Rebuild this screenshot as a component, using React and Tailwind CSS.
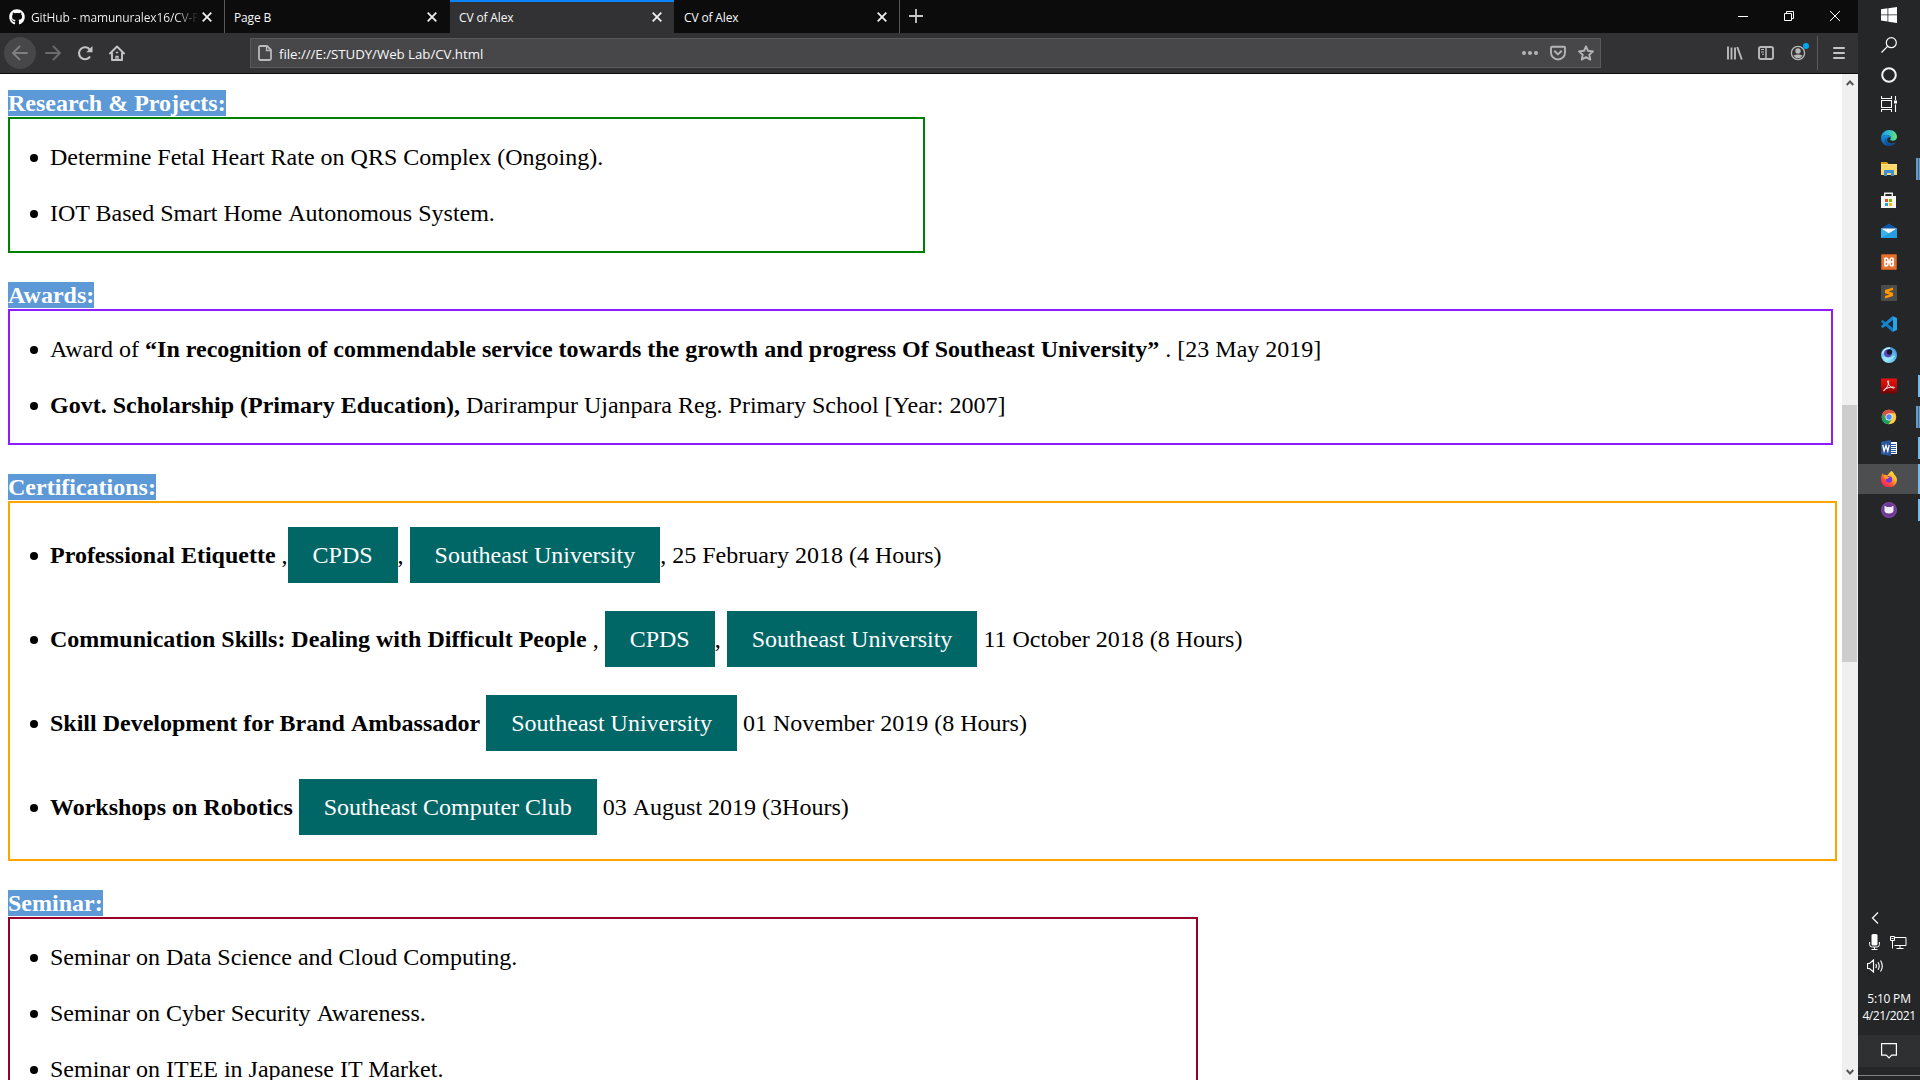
import React from 'react';
import { FaGithub } from 'react-icons/fa';

const Tab = ({ title, icon, w, active, fade, border, pad = 'ml-[9px]', close = 'right-[13px]' }) => (
  <div
    className={`relative flex h-[33px] shrink-0 items-center ${w} ${active ? 'bg-[#323234] border-t-2 border-[#0a84ff]' : 'bg-[#0c0c0d]'}`}
  >
    {icon && <FaGithub className="ml-[9px] h-4 w-4 shrink-0 text-white" />}
    <span
      className={`whitespace-nowrap text-[12px] leading-[16px] tracking-[-0.14px] text-[#f9f9fa] ${active ? 'mt-0' : 'mt-[2px]'} ${icon ? 'ml-[6px]' : pad} ${fade ? 'bg-gradient-to-r from-[#f9f9fa] from-[86%] to-[#0c0c0d] bg-clip-text text-transparent' : ''}`}
    >
      {title}
    </span>
    <svg className={`absolute h-[10px] w-[10px] ${close} ${active ? 'top-[10px]' : 'top-[12px]'}`} viewBox="0 0 10 10" stroke="#f0f0f0" strokeWidth="1.8">
      <path d="M.7.7l8.600 8.600M9.300.7L.7 9.300" />
    </svg>
    {border && <div className="absolute right-0 top-0 h-[33px] w-px bg-[#58585a]" />}
  </div>
);

const Section = ({ title, w, color, children, first }) => (
  <section className={first ? '' : 'mt-7'}>
    <h2 className="flex h-7 items-center">
      <span className="h-[26px] bg-[#5c99d6] font-bold leading-[26px] text-white">{title}</span>
    </h2>
    <ul className={`flex flex-col gap-7 border-2 py-6 pl-10 ${w} ${color}`}>{children}</ul>
  </section>
);

const Item = ({ children, tall }) => (
  <li className={`relative whitespace-pre ${tall ? 'h-14 leading-[56px]' : 'h-7 leading-7'}`}>
    <span className={`absolute left-[-20px] h-2 w-2 rounded-full bg-black ${tall ? 'top-[25px]' : 'top-[11px]'}`} />
    {children}
  </li>
);

/* A separate inline box, so that the space before a capital A keeps its full width. */
const K = ({ children }) => <span className="inline-block">{children}</span>;

const Btn = ({ children }) => (
  <a className="inline-block h-14 bg-[#006666] px-[25px] align-top leading-[56px] text-white">{children}</a>
);

const I = 'h-4 w-4 block';
const icons = {
  search: (
    <svg className={I} viewBox="0 0 16 16" fill="none" stroke="#fff" strokeWidth="1.2"><circle cx="10.3" cy="5.7" r="5" /><path d="M6.8 9.2L.5 15.5" /></svg>
  ),
  cortana: (
    <svg className={I} viewBox="0 0 16 16" fill="none" stroke="#f4f4f4" strokeWidth="2"><circle cx="8" cy="8" r="6.8" /></svg>
  ),
  taskview: (
    <svg className={I} viewBox="0 0 16 16" fill="none" stroke="#fff" strokeWidth="1.1"><path d="M.5 4.5h10v7H.5zM.5 0v2.5h10V0M.5 16v-2.5h10V16M14.5 0v4M14.5 8.500v7.500" /><path d="M13 4.500h3v3h-3z" fill="#fff" stroke="none" /></svg>
  ),
  edge: (
    <svg className={I} viewBox="0 0 16 16">
      <defs>
        <linearGradient id="edgeTop" x1="0" x2="1"><stop stopColor="#1b9de2" /><stop offset=".55" stopColor="#35c1c8" /><stop offset="1" stopColor="#66eb6e" /></linearGradient>
        <linearGradient id="edgeLow" x1="0" y1="0" x2="0" y2="1"><stop stopColor="#1890df" /><stop offset="1" stopColor="#0c59a4" /></linearGradient>
      </defs>
      <path d="M0 8C.3 3 4 0 8.200 0 13 0 16 3.400 16 6.800c0 2.600-2 4-4.200 4-1.900 0-2.700-.7-2.700-1.200 0-.4.7-.7.7-1.800C9.800 6 7.900 5 5.800 5 2.500 5 .3 6.500 0 8z" fill="url(#edgeTop)" />
      <path d="M0 8c.4-2 2.500-3 5.200-3C8 5 9.800 6.500 9.800 7.500 8.500 6.600 6 7.500 6 10c0 2 2.500 4 5 3.500 1.500-.2 3-.8 3.600-1.200C13 14.800 10.700 16 8 16 3.500 16 0 12.500 0 8z" fill="url(#edgeLow)" />
      <path d="M5.500 7.400C4 9.500 5 14 10.300 14.200c2 0 3.500-.9 4.300-1.900C13 14.800 11 16 8.500 16 4.500 15.500 2.500 10 5.500 7.400z" fill="#114a8b" />
    </svg>
  ),
  explorer: (
    <svg className={I} viewBox="0 0 16 16"><path d="M0 1h6l1.500 2H0z" fill="#e39c0a" /><path d="M0 3h16v11H0z" fill="#ffd869" /><path d="M0 3h16v1H0z" fill="#fbe08a" /><path d="M3 15V9h10v6h-3v-3H6v3z" fill="#3d8fd6" /></svg>
  ),
  store: (
    <svg className={I} viewBox="0 0 16 16"><path d="M3.700 5V1.200h7.600V5" fill="none" stroke="#eee" strokeWidth="1.400" /><path d="M0 4h15v12H0z" fill="#f5f5f5" /><path d="M4 7h3v3H4z" fill="#e74c25" /><path d="M8 7h3v3H8z" fill="#7db700" /><path d="M4 11h3v3H4z" fill="#1ca4e8" /><path d="M8 11h3v3H8z" fill="#fdb900" /></svg>
  ),
  mail: (
    <svg className={I} viewBox="0 0 16 16"><path d="M0 5.500L8 .5l8 5V8H0z" fill="#0c56a8" /><path d="M0 5.500h16L8 11z" fill="#f4f7fa" /><path d="M0 5.500l8 5 8-5v9.500H0z" fill="#35b4ee" /><path d="M0 15L16 5.500V15z" fill="#1e90dc" opacity=".65" /></svg>
  ),
  xampp: (
    <svg className={I} viewBox="0 0 16 16"><rect x=".5" y=".5" width="15" height="15" rx=".5" fill="#e8702e" stroke="#b85a24" /><path d="M7 8H5.300C3.200 8 3.200 4 5.300 4S7 8 7 8zM9 8h1.700c2.100 0 2.100-4 0-4S9 8 9 8zM7 8H5.300c-2.100 0-2.100 4 0 4S7 8 7 8zM9 8h1.700c2.100 0 2.100 4 0 4S9 8 9 8zM6.500 8h3" fill="none" stroke="#fff" strokeWidth="1.700" strokeLinejoin="round" /></svg>
  ),
  sublime: (
    <svg className={I} viewBox="0 0 16 16"><rect width="16" height="16" rx="1" fill="#4c4c4c" /><path d="M12 2.600L4 5.100v3.100l4.500 1.400L4 11v2.500l8-2.600V7.700L7.500 6.400 12 5z" fill="#ff9800" /></svg>
  ),
  vscode: (
    <svg className={I} viewBox="0 0 16 16"><path d="M12 12L1.800 4 .2 4.900v1L11.500 16z" fill="#0d7dc6" /><path d="M12 4L1.800 12l-1.600-.9v-1L11.500 0z" fill="#1689d2" /><path d="M11.500 0L16 2v12l-4.500 2 .5-4V4z" fill="#28a3ee" /></svg>
  ),
  orb: (
    <svg className={I} viewBox="0 0 16 16"><defs><radialGradient id="orb" cx=".35" cy=".8" r=".9"><stop stopColor="#a3ecff" /><stop offset=".5" stopColor="#62c4f5" /><stop offset="1" stopColor="#3c8fe0" /></radialGradient></defs><circle cx="8" cy="8" r="8" fill="url(#orb)" /><path d="M1.500 6.500A7 6 0 0 1 9 1.300" stroke="#d2f4ff" strokeWidth="1.400" fill="none" /><path d="M2.500 10q5 5 11-1" stroke="#a5e8ff" strokeWidth="1.300" fill="none" /><circle cx="7" cy="6.300" r="3.900" fill="#5b46b5" /><circle cx="8.500" cy="5" r="2.700" fill="#17172b" /></svg>
  ),
  acrobat: (
    <svg className={I} viewBox="0 0 16 16"><defs><linearGradient id="pdf" x1="0" y1="0" x2="0" y2="1"><stop stopColor="#e81410" /><stop offset=".5" stopColor="#c40c0a" /><stop offset="1" stopColor="#6e0303" /></linearGradient></defs><path d="M0 .5h16v15H0z" fill="url(#pdf)" /><path d="M2.800 12.700c2-1 5.500-6.200 4.800-9.500-.2-1-1.300-.6-.9.800C7.300 7 9.800 9.800 12.700 10.200c1.300 0 .9-1.300-.9-1.200-3 .1-6.600 1-8.500 2.500-1 .8-.8 1.300-.5 1.200z" fill="none" stroke="#fff" strokeWidth=".9" /></svg>
  ),
  chrome: (
    <svg className={I} viewBox="0 0 16 16"><circle cx="8" cy="8" r="7.300" fill="#fdcb44" /><path d="M1.700 4.350A7.300 7.300 0 0 1 14.300 4.350H8L4.750 9.900z" fill="#dd5144" /><path d="M1.700 4.350A7.300 7.300 0 0 0 7.500 15.300l3.700-5.500L8 11.500 4.750 9.900z" fill="#1da361" /><circle cx="8" cy="8" r="3.500" fill="#f1f1f1" /><circle cx="8" cy="8" r="2.700" fill="#4c8bf5" /></svg>
  ),
  word: (
    <svg className={I} viewBox="0 0 16 16"><path d="M9 2h7v12H9z" fill="#fff" /><path d="M10 4.500h5M10 6.500h5M10 8.500h5M10 10.500h5M10 12.500h5" stroke="#2b579a" /><path d="M0 1.800L10 0v16L0 14.200z" fill="#2b579a" /><path d="M1.800 5l1.300 6L5 5.500 6.800 11l1.400-6" fill="none" stroke="#fff" strokeWidth="1.300" /></svg>
  ),
  firefox: (
    <svg className={I} viewBox="0 0 16 16"><defs><linearGradient id="fox" x1="1" y1="0" x2="0.200" y2="1"><stop stopColor="#fff44f" /><stop offset=".4" stopColor="#ffb52a" /><stop offset=".68" stopColor="#ff5634" /><stop offset="1" stopColor="#f5156c" /></linearGradient></defs><path d="M10.500 0c2 1.500 2.400 2.700 2.700 3.500C15 5 16 7 16 9a8 7.300 0 0 1-16 0C0 6 .6 4 1.800 2.300L2.900 4C4 3.500 5.500 3.700 6.500 4.500 7.500 2.500 9 1 10.500 0z" fill="url(#fox)" /><circle cx="8" cy="8.500" r="3.200" fill="#7a35dc" /><path d="M2.500 5.200c2-1 4.500 0 5.800 1.600L6 8C4.300 8.200 3 7.200 2.500 5.200z" fill="#ff9a26" /></svg>
  ),
  octo: (
    <svg className={I} viewBox="0 0 16 16"><circle cx="8" cy="8" r="8" fill="#6a3a94" /><circle cx="8" cy="8" r="7.300" fill="none" stroke="#84519f" strokeWidth=".8" /><path d="M3.800 3.800L6 4.900h4l2.200-1.100c.5 1 .4 2 .2 2.600.9 3.500-1 5.200-4.400 5.200S2.700 9.900 3.600 6.400c-.3-.8-.2-1.800.2-2.600z" fill="#f3eef7" /></svg>
  ),
};

const taskItems = [
  ['edge', 0], ['explorer', 2], ['store', 0], ['mail', 0], ['xampp', 0], ['sublime', 0], ['vscode', 0], ['orb', 0],
  ['acrobat', 1], ['chrome', 2], ['word', 1], ['firefox', 1], ['octo', 1],
];

const Taskbar = () => (
  <aside className="flex h-full w-[62px] flex-col bg-[#242628] font-['Open_Sans',sans-serif]">
    <div className="flex flex-col items-center pt-[7px]">
      <svg className={I} viewBox="0 0 16 16" fill="#fff"><path d="M0 2.200l6.500-.9v6.200H0zM7.300 1.200L16 0v7.500H7.300zM0 8.300h6.500v6.200L0 13.600zM7.300 8.300H16V16l-8.700-1.200z" /></svg>
      <div className="mt-[14px]">{icons.search}</div>
      <div className="mt-[14px]">{icons.cortana}</div>
      <div className="mt-[13px]">{icons.taskview}</div>
    </div>
    <div className="mt-[10px] flex flex-col">
      {taskItems.map(([k, n]) => (
        <div key={k} className={`relative flex items-center justify-center ${k === 'firefox' ? 'mt-px h-[30px] bg-[#4c4e50]' : 'h-[31px]'}`}>
          {icons[k]}
          {n > 0 && (
            <div className={`absolute right-0 flex ${k === 'firefox' ? 'top-0 h-[30px]' : 'top-[5px] h-[22px]'}`}>
              {n === 2 ? (
                <>
                  <div className="w-[2px] bg-[#6a9ac4]" />
                  <div className="w-px bg-[#44688a]" />
                  <div className="w-px bg-[#6a9fce]" />
                </>
              ) : (
                <div className="w-[2px] bg-[#76b9ed]" />
              )}
            </div>
          )}
        </div>
      ))}
    </div>
    <div className="mt-auto flex flex-col">
      <svg className="ml-[13px] h-3 w-2" viewBox="0 0 8 12" fill="none" stroke="#fff" strokeWidth="1.200"><path d="M7 .5L1.500 6 7 11.500" /></svg>
      <div className="mt-[10px] flex h-4 items-center pl-[11px]">
        <svg className="h-4 w-[11px]" viewBox="0 0 11 16"><rect x="2.500" width="6" height="11.500" rx="1.500" fill="#fff" /><path d="M.6 8v2.500q0 2.500 2.500 2.500h5q2.300 0 2.300-2.500V8M5.500 13v2.500M2.500 15.500h6" fill="none" stroke="#fff" /></svg>
        <svg className="ml-[10px] h-[14px] w-[17px]" viewBox="0 0 17 14" fill="none" stroke="#fff"><path d="M5 2.500h11v8H4.500M10 10.500v3M6.500 13.500h7M.5 1.500h4v4h-4zM2.500 5.500v8" /><path d="M1.500 3.500h2" /></svg>
      </div>
      <svg className="ml-[9px] mt-[9px] h-[14px] w-[17px]" viewBox="0 0 17 14" fill="none" stroke="#fff" strokeWidth="1.150"><path d="M.5 4.500h2l4-3.500v12l-4-3.500h-2zM8.800 5q1.200 2 0 4M11 3.200q2.400 3.800 0 7.600M13.500 1.500q3.600 5.500 0 11" /></svg>
      <div className="mt-[17px] h-[17px] text-center text-[12px] leading-[17px] tracking-[-0.2px] text-white">5:10 PM</div>
      <div className="h-[17px] whitespace-nowrap text-center text-[12px] leading-[17px] tracking-[-0.4px] text-white">4/21/2021</div>
      <div className="mt-[11px] flex h-8 items-center justify-center bg-[#2e3032]">
        <svg className="h-4 w-4" viewBox="0 0 16 16" fill="none" stroke="#fff" strokeWidth="1.200"><path d="M.6.6h14.800v11.600h-4.700L8 14.900 5.300 12.200H.6z" /></svg>
      </div>
      <div className="mt-2 h-px bg-[#808284]" />
      <div className="h-1" />
    </div>
  </aside>
);

const WindowButtons = () => (
  <div className="ml-auto flex h-8 items-center">
    <svg className="mr-9 h-[11px] w-[10px]" viewBox="0 0 10 11" stroke="#fff"><path d="M0 5.500h10" /></svg>
    <svg className="mr-9 h-[10px] w-[10px]" viewBox="0 0 10 10" fill="none" stroke="#fff"><path d="M.5 2.500h7v7h-7zM2.500 2.500v-2h7v7h-2" /></svg>
    <svg className="mr-[18px] h-[10px] w-[10px]" viewBox="0 0 10 10" stroke="#fff"><path d="M0 0l10 10M10 0L0 10" /></svg>
  </div>
);

const NavBar = () => (
  <div className="flex h-[41px] items-center border-b border-[#0c0c0d] bg-[#323234]">
    <div className="ml-1 grid h-8 w-8 place-items-center rounded-full bg-[#474749]">
      <svg className={I} viewBox="0 0 16 16" fill="none" stroke="#7f7f80" strokeWidth="1.900" strokeLinecap="round" strokeLinejoin="round"><path d="M15 8H1.500M7.500 1.500L1 8l6.500 6.500" /></svg>
    </div>
    <svg className="ml-[9px] h-4 w-4" viewBox="0 0 16 16" fill="none" stroke="#6b6b6d" strokeWidth="1.900" strokeLinecap="round" strokeLinejoin="round"><path d="M1 8h13.500M8.500 1.500L15 8l-6.500 6.500" /></svg>
    <svg className="ml-4 h-4 w-4" viewBox="0 0 16 16"><path d="M12.500 12.200A6 6 0 1 1 12.800 4.600" fill="none" stroke="#c4c4c5" strokeWidth="2.100" strokeLinecap="round" /><path d="M15.500 1v6.200H9.300z" fill="#c4c4c5" /></svg>
    <svg className="ml-4 h-4 w-4" viewBox="0 0 16 16" fill="none" stroke="#c4c4c5" strokeWidth="1.900" strokeLinecap="round" strokeLinejoin="round"><path d="M1 8.500l7-7 7 7M3 8v7h10V8" /><path d="M7 15v-3.500h2V15" strokeWidth="1.300" /><path d="M7.500 7.500h1" strokeWidth="1.600" /></svg>
    <div className="ml-[125px] flex h-[30px] w-[1351px] items-center border border-[#59595b] bg-[#474749]">
      <svg className="ml-[7px] h-4 w-[14px]" viewBox="0 0 14 16" fill="none" stroke="#b9b9ba" strokeWidth="1.800"><path d="M3 1h6l4 4v8.500q0 1.500-1.500 1.500h-9Q1 15 1 13.500v-11Q1 1 2.500 1z" strokeLinejoin="round" /><path d="M8.500 1v4.500H13" strokeWidth="1.300" /></svg>
      <span className="ml-[7px] mt-[2px] text-[13.300px] leading-4 tracking-[-0.050px] text-[#f9f9fa]">file:///E:/STUDY/Web Lab/CV.html</span>
      <div className="ml-auto mr-[6px] flex items-center">
        <svg className="h-4 w-4" viewBox="0 0 16 16" fill="#b5b5b6"><circle cx="2" cy="8" r="2" /><circle cx="8" cy="8" r="2" /><circle cx="14" cy="8" r="2" /></svg>
        <svg className="ml-3 h-4 w-4" viewBox="0 0 16 16" fill="none" stroke="#b5b5b6" strokeWidth="1.900" strokeLinejoin="round" strokeLinecap="round"><path d="M2 1.800h12q1 0 1 1V7.500a7 7 0 0 1-14 0V2.800q0-1 1-1z" /><path d="M4.800 6.300L8 9.400l3.200-3.100" /></svg>
        <svg className="ml-3 h-4 w-4" viewBox="0 0 16 16" fill="none" stroke="#b5b5b6" strokeWidth="1.900" strokeLinejoin="round"><path d="M8 1.300l2 4.500 5 .6-3.700 3.300 1 4.900L8 12.200l-4.300 2.400 1-4.900L1 6.400l5-.6z" /></svg>
      </div>
    </div>
    <svg className="ml-[126px] h-4 w-4" viewBox="0 0 16 16" fill="none" stroke="#b9b9ba" strokeWidth="2"><path d="M1 1.500v13M4.500 2.500v12M8 2.500v12M10.300 2l4.500 12.500" strokeWidth="1.900" /></svg>
    <svg className="ml-[15px] h-4 w-4" viewBox="0 0 16 16" fill="none" stroke="#b9b9ba" strokeWidth="1.900"><rect x="1" y="2" width="14" height="12" rx="1.800" /><path d="M8 2v12" strokeWidth="1.500" /><path d="M3 4.500h3M3 7h3M4 9.300h2" strokeWidth="1" /></svg>
    <div className="relative ml-4 h-4 w-4">
      <svg className={I} viewBox="0 0 16 16"><circle cx="8" cy="8" r="6.600" fill="none" stroke="#b9b9ba" strokeWidth="1.300" /><circle cx="8" cy="6" r="2.700" fill="#b9b9ba" /><path d="M3.500 10.500q4.500-2 9 0-1.500 2.700-4.500 2.700t-4.500-2.700z" fill="#b9b9ba" /></svg>
      <div className="absolute -right-[3px] -top-[2px] h-[6px] w-[6px] rounded-full bg-[#00a5f5]" />
    </div>
    <div className="ml-[11px] h-[34px] w-px bg-[#5c5c5e]" />
    <svg className="ml-[15px] h-4 w-3" viewBox="0 0 12 16" stroke="#c4c4c5" strokeWidth="2" strokeLinecap="round"><path d="M1 3h10M1 8h10M1 13h10" /></svg>
  </div>
);

export default function App() {
  return (
    <div className="flex h-[1080px] w-[1920px] overflow-hidden bg-white">
      <div className="flex h-full w-[1858px] flex-col">
        <header className="font-['Open_Sans',sans-serif]">
          <div className="flex h-[33px] items-start bg-[#0c0c0d]">
            <Tab title="GitHub - mamunuralex16/CV-P" icon fade w="w-[225px]" border />
            <Tab title="Page B" w="w-[225px]" />
            <Tab title="CV of Alex" w="w-[224px]" active close="right-[12px]" />
            <Tab title="CV of Alex" w="w-[226px]" border pad="ml-[10px]" />
            <svg className="ml-[9px] mt-[9px] h-[14px] w-[14px]" viewBox="0 0 14 14" stroke="#c8c8c9" strokeWidth="1.800"><path d="M7 0v14M0 7h14" /></svg>
            <WindowButtons />
          </div>
          <NavBar />
        </header>
        <div className="flex min-h-0 flex-1">
          <main className="h-full w-[1842px] overflow-hidden pl-2 pt-[15px] font-['Liberation_Serif',serif] text-[24px] text-black">
            <Section title="Research & Projects:" w="w-[917px]" color="border-[#008000]" first>
              <Item>Determine Fetal Heart Rate on QRS Complex (Ongoing).</Item>
              <Item>IOT Based Smart Home <K>Autonomous System.</K></Item>
            </Section>
            <Section title="Awards:" w="w-[1825px]" color="border-[#8f1bff]">
              <Item>Award of <b>“In recognition of commendable service towards the growth and progress Of Southeast University”</b> . [23 May 2019]</Item>
              <Item><b>Govt. Scholarship (Primary Education),</b> Darirampur Ujanpara Reg. Primary School [Year: 2007]</Item>
            </Section>
            <Section title="Certifications:" w="w-[1829px]" color="border-[#ffa500]">
              <Item tall><b>Professional Etiquette</b> ,<Btn>CPDS</Btn>, <Btn>Southeast University</Btn>, 25 February 2018 (4 Hours)</Item>
              <Item tall><b>Communication Skills: Dealing with Difficult People</b> , <Btn>CPDS</Btn>, <Btn>Southeast University</Btn> 11 October 2018 (8 Hours)</Item>
              <Item tall><b>Skill Development for Brand <K>Ambassador</K></b> <Btn>Southeast University</Btn> 01 November 2019 (8 Hours)</Item>
              <Item tall><b>Workshops on Robotics</b> <Btn>Southeast Computer Club</Btn> 03 <K>August 2019 (3Hours)</K></Item>
            </Section>
            <Section title="Seminar:" w="w-[1190px]" color="border-[#960028]">
              <Item>Seminar on Data Science and Cloud Computing.</Item>
              <Item>Seminar on Cyber Security <K>Awareness.</K></Item>
              <Item>Seminar on ITEE in Japanese IT Market.</Item>
            </Section>
          </main>
          <div className="flex h-full w-4 flex-col items-center bg-[#f0f0f0]">
            <svg className="mt-[6px] h-[6px] w-2 shrink-0" viewBox="0 0 8 6" fill="none" stroke="#555" strokeWidth="2"><path d="M.7 5L4 1.500 7.300 5" /></svg>
            <div className="mt-[319px] h-[257px] w-full border-r border-[#f0f0f0] bg-[#cdcdcd]" />
            <svg className="mb-[5px] mt-auto h-[6px] w-2 shrink-0" viewBox="0 0 8 6" fill="none" stroke="#555" strokeWidth="2"><path d="M.7 1L4 4.500 7.300 1" /></svg>
          </div>
        </div>
      </div>
      <Taskbar />
    </div>
  );
}
